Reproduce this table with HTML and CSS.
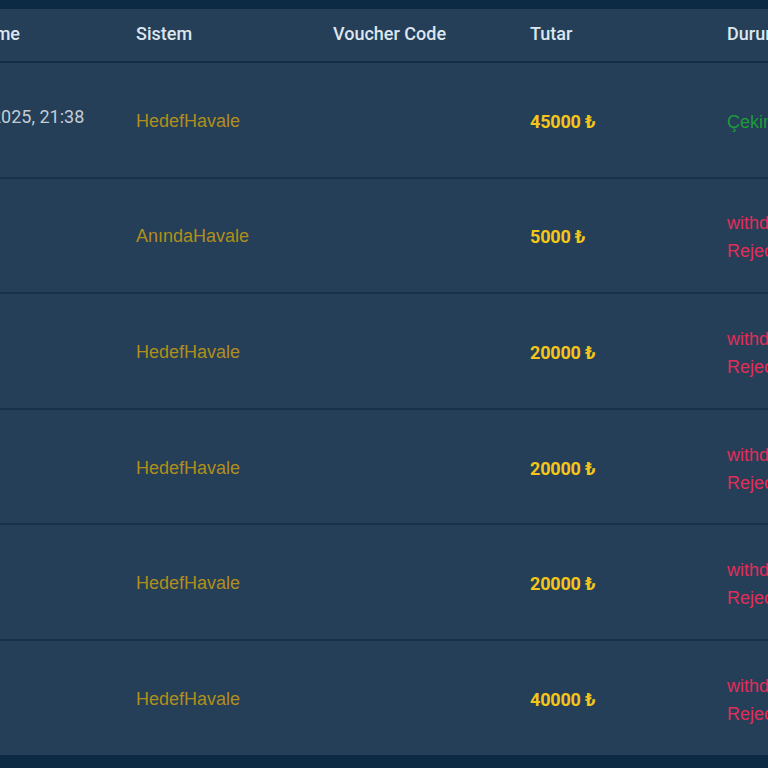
FILE: index.html
```html
<!DOCTYPE html>
<html>
<head>
<meta charset="utf-8">
<link rel="stylesheet" href="styles.css">
</head>
<body>
<div class="page">
  <div class="table">
    <div class="row head">
      <div class="cell">Date/Time</div>
      <div class="cell">Sistem</div>
      <div class="cell">Voucher Code</div>
      <div class="cell">Tutar</div>
      <div class="cell">Durum</div>
      <div class="cell"></div>
    </div>
    <div class="row">
      <div class="cell date">10.06.2025, 21:38</div>
      <div class="cell sys">HedefHavale</div>
      <div class="cell"></div>
      <div class="cell amt">45000 ₺</div>
      <div class="cell status ok">Çekim Onaylandı</div>
      <div class="cell"></div>
    </div>
    <div class="row">
      <div class="cell date"></div>
      <div class="cell sys">AnındaHavale</div>
      <div class="cell"></div>
      <div class="cell amt">5000 ₺</div>
      <div class="cell status bad">withdraw<br>Rejected</div>
      <div class="cell"></div>
    </div>
    <div class="row">
      <div class="cell date"></div>
      <div class="cell sys">HedefHavale</div>
      <div class="cell"></div>
      <div class="cell amt">20000 ₺</div>
      <div class="cell status bad">withdraw<br>Rejected</div>
      <div class="cell"></div>
    </div>
    <div class="row">
      <div class="cell date"></div>
      <div class="cell sys">HedefHavale</div>
      <div class="cell"></div>
      <div class="cell amt">20000 ₺</div>
      <div class="cell status bad">withdraw<br>Rejected</div>
      <div class="cell"></div>
    </div>
    <div class="row">
      <div class="cell date"></div>
      <div class="cell sys">HedefHavale</div>
      <div class="cell"></div>
      <div class="cell amt">20000 ₺</div>
      <div class="cell status bad">withdraw<br>Rejected</div>
      <div class="cell"></div>
    </div>
    <div class="row last">
      <div class="cell date"></div>
      <div class="cell sys">HedefHavale</div>
      <div class="cell"></div>
      <div class="cell amt">40000 ₺</div>
      <div class="cell status bad">withdraw<br>Rejected</div>
      <div class="cell"></div>
    </div>
  </div>
</div>
</body>
</html>
```
FILE: styles.css
```css
html, body {
  margin: 0;
  padding: 0;
  background: #0d2a45;
  overflow: hidden;
}
.page {
  width: 768px;
  height: 768px;
  overflow: hidden;
  padding-top: 9px;
  box-sizing: border-box;
}
.table {
  margin-left: -77px;
  width: 1182px;
  background: #243f57;
  font-family: Roboto, "Liberation Sans", sans-serif;
}
.row {
  display: grid;
  grid-template-columns: repeat(6, 197px);
  height: 113.6px;
  border-bottom: 2px solid #17324b;
  align-items: center;
}
.row.last {
  border-bottom: none;
}
.row.head {
  height: 52px;
  border-bottom: 2px solid #112c44;
}
.cell {
  padding-left: 16px;
  white-space: nowrap;
}
.head .cell {
  color: #dde6ef;
  font-weight: 500;
  font-size: 18px;
  padding-bottom: 3px;
}
.head .cell:first-child {
  padding-left: 12px;
}
.date {
  color: #c3ccd6;
  font-size: 18px;
  padding-bottom: 6px;
}
.row .date {
  padding-left: 18px;
}
.sys {
  color: #b08e1c;
  font-family: "Liberation Sans", Arial, sans-serif;
  font-size: 18px;
  padding-top: 3px;
}
.amt {
  color: #f6c51a;
  font-weight: 700;
  font-size: 18px;
  letter-spacing: -0.2px;
  padding-top: 3px;
}
.status {
  font-family: "Liberation Sans", Arial, sans-serif;
  font-size: 18px;
  line-height: 28px;
  padding-top: 4px;
}
.status.ok {
  color: #1d9a3a;
}
.status.bad {
  color: #e22d5a;
}
```
